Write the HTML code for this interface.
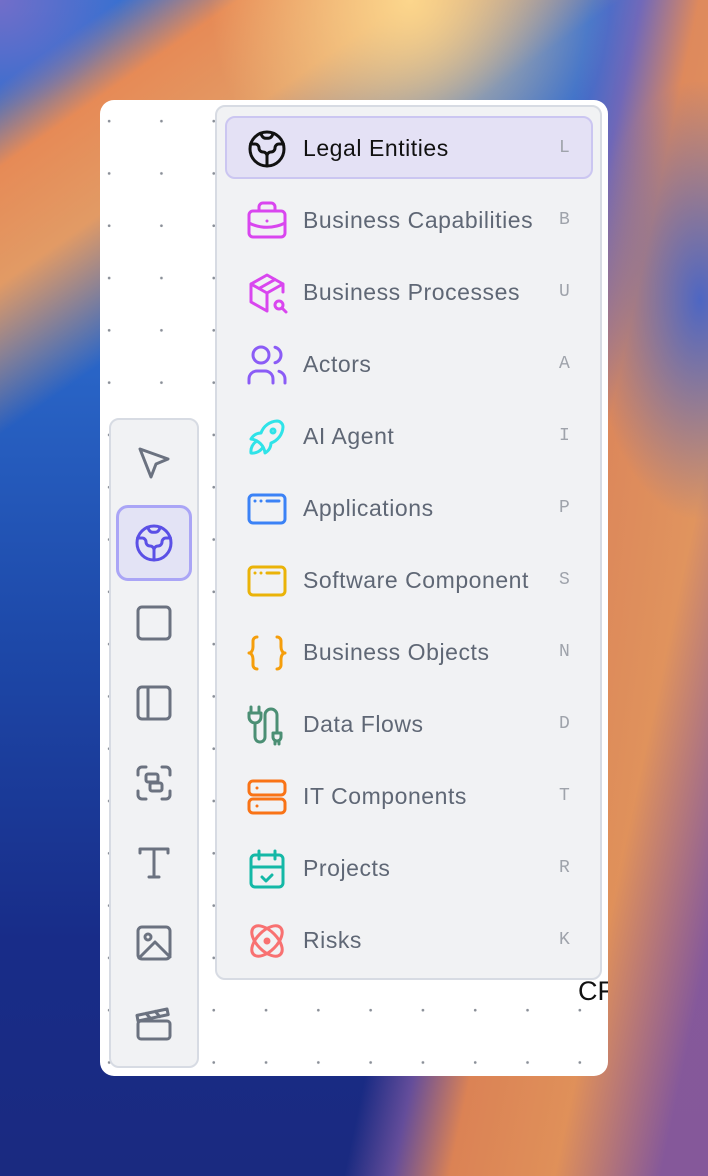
<!DOCTYPE html>
<html><head><meta charset="utf-8"><style>
*{box-sizing:border-box;margin:0;padding:0}
body{width:708px;height:1176px;overflow:hidden;position:relative;font-family:"Liberation Sans",sans-serif;
background:
radial-gradient(ellipse 200px 220px at 410px 0px,rgba(252,214,140,1),rgba(250,180,110,0) 100%),
radial-gradient(ellipse 110px 220px at 700px 300px,rgba(70,100,200,.95),rgba(70,100,200,0) 100%),
radial-gradient(ellipse 120px 110px at 0px 0px,rgba(120,110,200,.9),rgba(120,110,200,0) 100%),
linear-gradient(145deg,rgba(0,0,0,0) 0 5%,rgba(240,140,80,.95) 10%,rgba(245,160,90,.9) 17%,rgba(240,140,80,0) 26%),
linear-gradient(102deg,rgba(0,0,0,0) 0 62%,rgba(150,100,170,.6) 67%,rgba(240,140,80,.9) 73%,rgba(245,155,85,.9) 84%,rgba(160,100,160,.8) 95%),
linear-gradient(180deg,#3a70d0 0%,#2a66c8 30%,#1d48a8 55%,#182c88 80%,#1a2a80 100%);}
.card{position:absolute;left:100px;top:100px;width:508px;height:976px;border-radius:14px;overflow:hidden;
background-image:radial-gradient(circle,#8a8f98 1.1px,transparent 1.6px);background-size:52.3px 52.3px;background-position:-17px -5px;background-color:#fff}
.cf{position:absolute;left:478px;top:876px;font-size:27px;color:#111}
.tb{position:absolute;left:9px;top:318px;width:90px;height:650px;background:#f1f2f4;border:2px solid #d7dbe3;border-radius:10px}
.tbi{position:absolute;transform:translate(-50%,-50%);width:48px;height:48px}
.sel{position:absolute;left:16px;top:405px;width:76px;height:76px;background:#e3e3f5;border:3px solid #aaa5f6;border-radius:12px}
.menu{position:absolute;left:115px;top:5px;width:387px;height:875px;background:#f1f2f4;border:2px solid #d7dbe3;border-radius:10px}
.hl{position:absolute;left:8px;top:9px;width:368px;height:63px;background:#e4e1f5;border:2px solid #cbc6f1;border-radius:10px}
.it{position:absolute;left:0;width:383px;height:72px}
.it svg{position:absolute;left:26px;top:12px;width:48px;height:48px}
.it .t{position:absolute;left:86px;top:22px;font-size:23px;color:#5f6775;white-space:nowrap;letter-spacing:.55px}
.it .k{position:absolute;left:342px;top:25px;font-family:"Liberation Mono",monospace;font-size:18px;color:#9fa3ab}
svg{fill:none;stroke-width:1.5;stroke-linecap:round;stroke-linejoin:round}
</style></head><body>
<div class="card">
<div class="cf">CF</div>
<div class="tb"></div>
<div class="sel"></div>
<svg class="tbi" style="left:54px;top:363px" viewBox="0 0 24 24" stroke="#6b7280"><path d="M5 5l14 5-6 2.5L10.5 19z"/></svg>
<svg class="tbi" style="left:54px;top:443px" viewBox="0 0 24 24" stroke="#5b50e6"><circle cx="12" cy="12" r="8.5"/><path d="M3.8 9.5H6a2 2 0 0 1 2 2 2 2 0 0 0 2 2 2 2 0 0 1 2 2v5M12 15.5a2 2 0 0 1 2-2 2 2 0 0 0 2-2 2 2 0 0 1 2-2h2.2M8.8 4.2l.8 1.4a2 2 0 0 0 1.7 1h1.4a2 2 0 0 0 1.7-1l.8-1.4"/></svg>
<svg class="tbi" style="left:54px;top:523px" viewBox="0 0 24 24" stroke="#6b7280"><rect x="4" y="4" width="16" height="16" rx="2"/></svg>
<svg class="tbi" style="left:54px;top:603px" viewBox="0 0 24 24" stroke="#6b7280"><rect x="4" y="4" width="16" height="16" rx="2"/><path d="M9 4v16"/></svg>
<svg class="tbi" style="left:54px;top:683px" viewBox="0 0 24 24" stroke="#6b7280"><path d="M4 8V6a2 2 0 0 1 2-2h2M16 4h2a2 2 0 0 1 2 2v2M20 16v2a2 2 0 0 1-2 2h-2M8 20H6a2 2 0 0 1-2-2v-2"/><rect x="8" y="7.5" width="6" height="4" rx="1"/><rect x="10" y="12" width="6" height="4" rx="1"/></svg>
<svg class="tbi" style="left:54px;top:763px" viewBox="0 0 24 24" stroke="#6b7280"><path d="M5 7V5h14v2M12 5v14M9.5 19h5"/></svg>
<svg class="tbi" style="left:54px;top:843px" viewBox="0 0 24 24" stroke="#6b7280"><rect x="4" y="4" width="16" height="16" rx="2"/><circle cx="9" cy="9" r="1.5"/><path d="M4.5 19.5l8-8 7.5 7.5"/></svg>
<svg class="tbi" style="left:54px;top:923px" viewBox="0 0 24 24" stroke="#6b7280"><rect x="4" y="11" width="16" height="9" rx="1.5"/><path d="M4 11l-.5-2.8 15-3.2.6 2.8zM8 7.2l2.3 2.6M12.6 6.2l2.3 2.6"/></svg>

<div class="menu">
<div class="hl"></div>
<div class="it" style="top:6px"><svg viewBox="0 0 24 24" stroke="#111"><circle cx="12" cy="12" r="8.5"/><path d="M3.8 9.5H6a2 2 0 0 1 2 2 2 2 0 0 0 2 2 2 2 0 0 1 2 2v5M12 15.5a2 2 0 0 1 2-2 2 2 0 0 0 2-2 2 2 0 0 1 2-2h2.2M8.8 4.2l.8 1.4a2 2 0 0 0 1.7 1h1.4a2 2 0 0 0 1.7-1l.8-1.4"/></svg><span class="t" style="color:#111">Legal Entities</span><span class="k">L</span></div>
<div class="it" style="top:78px"><svg viewBox="0 0 24 24" stroke="#d946ef"><rect x="3" y="7" width="18" height="13" rx="2"/><path d="M8 7V5a2 2 0 0 1 2-2h4a2 2 0 0 1 2 2v2M12 12v.01M3 13a20 20 0 0 0 18 0"/></svg><span class="t">Business Capabilities</span><span class="k">B</span></div>
<div class="it" style="top:150px"><svg viewBox="0 0 24 24" stroke="#d946ef"><path d="M12 21l-8-4.5v-9L12 3l8 4.5v4M12 12l8-4.5M12 12v9M12 12L4 7.5M16 5.25l-8 4.5"/><circle cx="18" cy="18" r="2"/><path d="M19.5 19.5L21.5 21.5"/></svg><span class="t">Business Processes</span><span class="k">U</span></div>
<div class="it" style="top:222px"><svg viewBox="0 0 24 24" stroke="#8b5cf6"><circle cx="9" cy="7" r="4"/><path d="M3 21v-2a4 4 0 0 1 4-4h4a4 4 0 0 1 4 4v2M16 3.13a4 4 0 0 1 0 7.75M21 21v-2a4 4 0 0 0-3-3.85"/></svg><span class="t">Actors</span><span class="k">A</span></div>
<div class="it" style="top:294px"><svg viewBox="0 0 24 24" stroke="#2fe3e8"><path d="M4 13a8 8 0 0 1 7 7 6 6 0 0 0 3-5 9 9 0 0 0 6-8 3 3 0 0 0-3-3 9 9 0 0 0-8 6 6 6 0 0 0-5 3M7 14a6 6 0 0 0-3 6 6 6 0 0 0 6-3"/><circle cx="15" cy="9" r="1"/></svg><span class="t">AI Agent</span><span class="k">I</span></div>
<div class="it" style="top:366px"><svg viewBox="0 0 24 24" stroke="#3b82f6"><rect x="3" y="5" width="18" height="14" rx="2"/><path d="M6 8h.01M9 8h.01M12 8h6"/></svg><span class="t">Applications</span><span class="k">P</span></div>
<div class="it" style="top:438px"><svg viewBox="0 0 24 24" stroke="#eab308"><rect x="3" y="5" width="18" height="14" rx="2"/><path d="M6 8h.01M9 8h.01M12 8h6"/></svg><span class="t">Software Component</span><span class="k">S</span></div>
<div class="it" style="top:510px"><svg viewBox="0 0 24 24" stroke="#f59e0b"><path d="M7 4a2 2 0 0 0-2 2v3a2 3 0 0 1-2 3 2 3 0 0 1 2 3v3a2 2 0 0 0 2 2M17 4a2 2 0 0 1 2 2v3a2 3 0 0 0 2 3 2 3 0 0 0-2 3v3a2 2 0 0 1-2 2"/></svg><span class="t">Business Objects</span><span class="k">N</span></div>
<div class="it" style="top:582px"><svg viewBox="0 0 24 24" stroke="#4b8f74"><path d="M4 3v3M8 3v3M3 6h6v2a3 3 0 0 1-6 0zM6 11v7a2.5 2.5 0 0 0 5 0V7a3 3 0 0 1 6 0v9M15 16h4v2a2 2 0 0 1-4 0zM16 20v1.5M18 20v1.5"/></svg><span class="t">Data Flows</span><span class="k">D</span></div>
<div class="it" style="top:654px"><svg viewBox="0 0 24 24" stroke="#f97316"><rect x="3" y="4" width="18" height="7" rx="2"/><rect x="3" y="13" width="18" height="7" rx="2"/><path d="M7 7.5v.01M7 16.5v.01"/></svg><span class="t">IT Components</span><span class="k">T</span></div>
<div class="it" style="top:726px"><svg viewBox="0 0 24 24" stroke="#14b8a6"><rect x="4" y="5" width="16" height="16" rx="2"/><path d="M16 3v4M8 3v4M4 11h16M9.5 16l2 2 3-3"/></svg><span class="t">Projects</span><span class="k">R</span></div>
<div class="it" style="top:798px"><svg viewBox="0 0 24 24" stroke="#f87171"><circle cx="12" cy="12" r="1" fill="#f87171"/><ellipse cx="12" cy="12" rx="9.5" ry="5" transform="rotate(45 12 12)"/><ellipse cx="12" cy="12" rx="9.5" ry="5" transform="rotate(-45 12 12)"/></svg><span class="t">Risks</span><span class="k">K</span></div>
</div>
</div>
</body></html>
